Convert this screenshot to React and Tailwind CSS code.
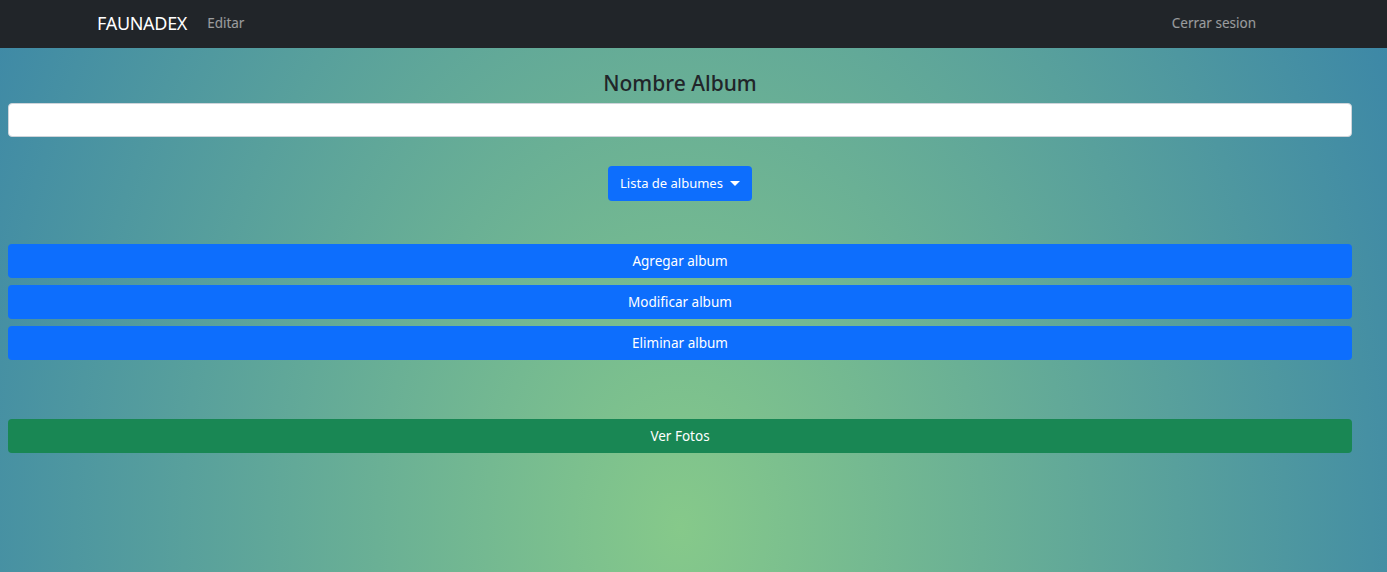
import React from 'react';

const font = { fontFamily: '"Noto Sans", "Open Sans", sans-serif' };

const BlockButton = ({ children, green }) => (
  <button
    className={
      green
        ? 'w-full h-[34px] pt-[2px] rounded-[4px] bg-[#198754] text-white text-[13.5px] leading-none'
        : 'w-full h-[34px] pt-[2px] rounded-[4px] bg-[#0d6efd] text-white text-[13.5px] leading-none'
    }
  >
    {children}
  </button>
);

export default function App() {
  return (
    <div className="min-h-[572px] flex flex-col" style={font}>
      {/* Navbar */}
      <nav className="h-12 bg-[#212529] flex items-center pl-[97px] pr-[131px] pb-[2px]">
        <span className="text-white text-[18px] tracking-[-0.3px]">FAUNADEX</span>
        <span className="ml-[20px] text-[13.5px] text-white/55">Editar</span>
        <span className="ml-auto text-[13.5px] text-white/55">Cerrar sesion</span>
      </nav>

      {/* Body */}
      <main className="flex-1 pl-2 pr-[35px] bg-[radial-gradient(800px_1100px_at_680px_480px,#86c98a,#3c87a7)]">
        <h4 className="mt-[21px] mb-[5px] text-center text-[21px] leading-[29px] font-medium text-[#212529]">
          Nombre Album
        </h4>
        <input
          type="text"
          className="block w-full h-[34px] bg-white border border-[#ced4da] rounded-[4px] px-3 outline-none"
        />

        <div className="mt-[29px] flex justify-center">
          <button className="h-[35px] px-3 rounded-[4px] bg-[#0d6efd] text-white text-[13px] flex items-center gap-[7px]">
            Lista de albumes
            <span className="w-0 h-0 border-l-[5px] border-r-[5px] border-t-[5px] border-l-transparent border-r-transparent border-t-white" />
          </button>
        </div>

        <div className="mt-[43px] flex flex-col gap-[7px]">
          <BlockButton>Agregar album</BlockButton>
          <BlockButton>Modificar album</BlockButton>
          <BlockButton>Eliminar album</BlockButton>
        </div>

        <div className="mt-[59px]">
          <BlockButton green>Ver Fotos</BlockButton>
        </div>
      </main>
    </div>
  );
}
